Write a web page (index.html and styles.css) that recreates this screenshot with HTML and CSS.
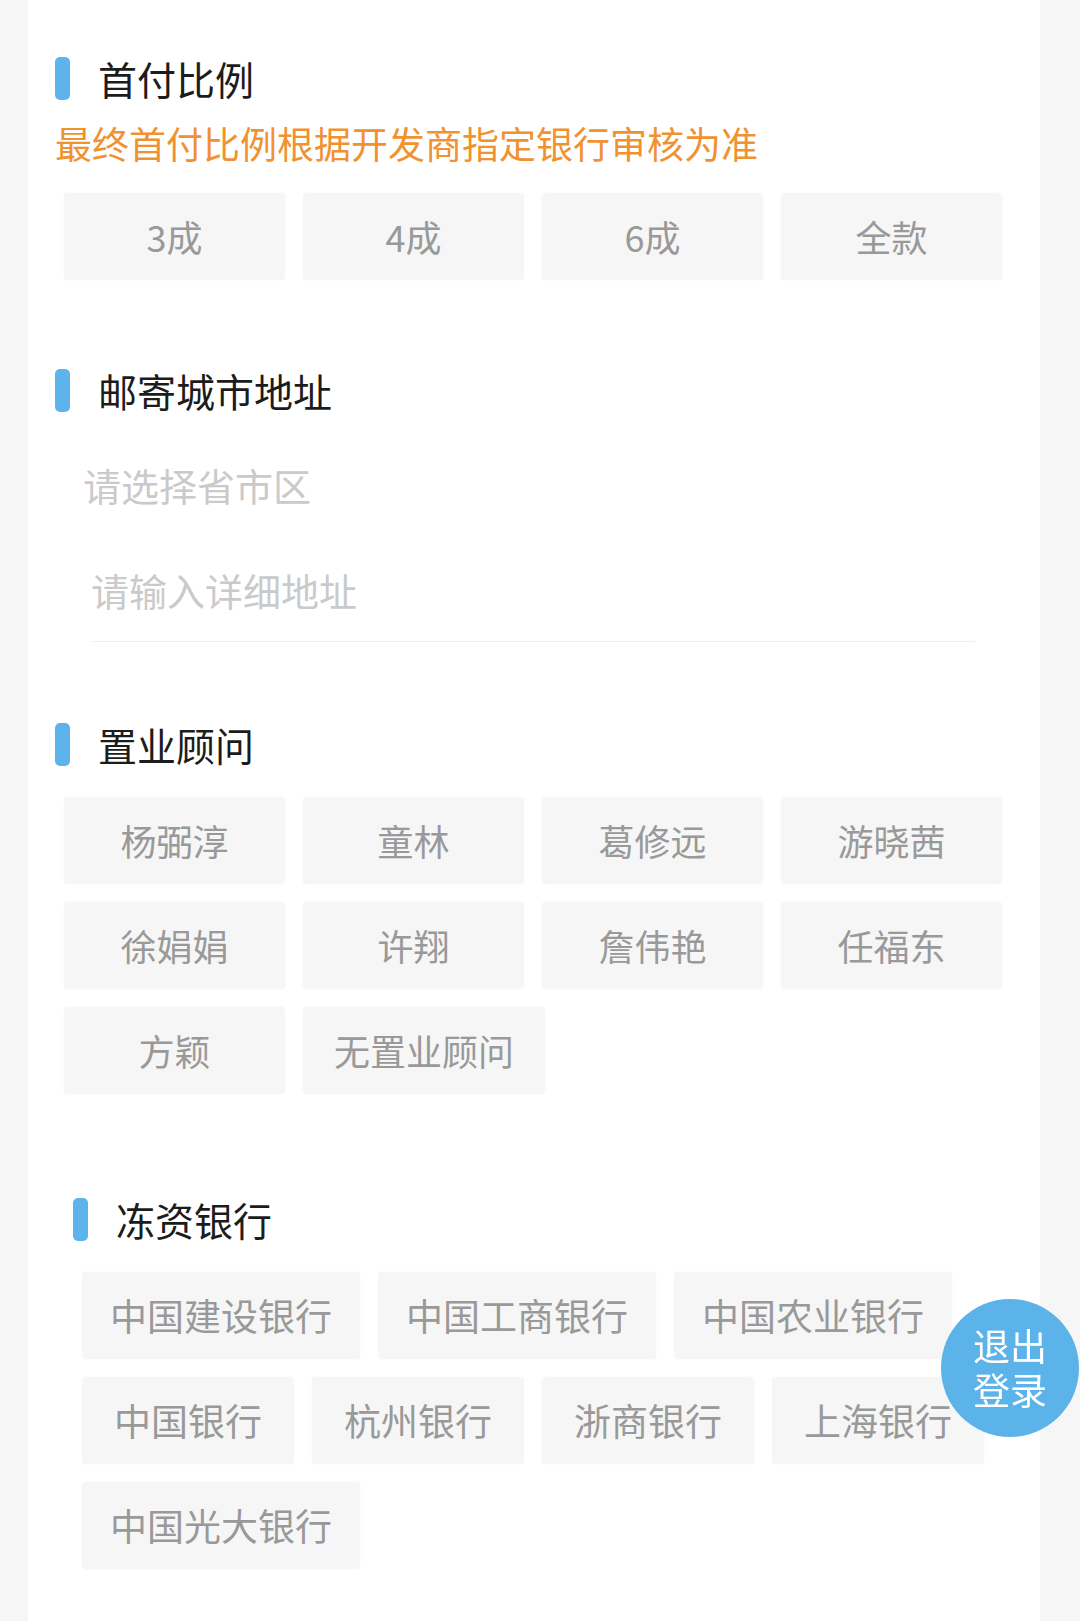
FILE: index.html
```html
<!DOCTYPE html>
<html lang="zh-CN">
<head>
    <meta charset="UTF-8">
    <meta name="viewport" content="width=device-width, initial-scale=1.0">
    <title>购房信息</title>
    <link rel="stylesheet" href="styles.css">
</head>
<body>
    <div class="card">
        <!-- 首付比例 -->
        <div class="section">
            <div class="section-title"><span class="bar"></span>首付比例</div>
            <div class="note">最终首付比例根据开发商指定银行审核为准</div>
            <div class="options">
                <div class="option">3成</div>
                <div class="option">4成</div>
                <div class="option">6成</div>
                <div class="option">全款</div>
            </div>
        </div>

        <!-- 邮寄地址 -->
        <div class="section section-address">
            <div class="section-title"><span class="bar"></span>邮寄城市地址</div>
            <div class="picker">请选择省市区</div>
            <div class="address-input">请输入详细地址</div>
        </div>

        <!-- 置业顾问 -->
        <div class="section section-advisor">
            <div class="section-title"><span class="bar"></span>置业顾问</div>
            <div class="options">
                <div class="option">杨弼淳</div>
                <div class="option">童林</div>
                <div class="option">葛修远</div>
                <div class="option">游晓茜</div>
                <div class="option">徐娟娟</div>
                <div class="option">许翔</div>
                <div class="option">詹伟艳</div>
                <div class="option">任福东</div>
                <div class="option">方颖</div>
                <div class="option">无置业顾问</div>
            </div>
        </div>

        <!-- 冻资银行 -->
        <div class="section section-bank">
            <div class="section-title"><span class="bar"></span>冻资银行</div>
            <div class="options">
                <div class="option bank">中国建设银行</div>
                <div class="option bank">中国工商银行</div>
                <div class="option bank">中国农业银行</div>
                <div class="option bank">中国银行</div>
                <div class="option bank">杭州银行</div>
                <div class="option bank">浙商银行</div>
                <div class="option bank">上海银行</div>
                <div class="option bank">中国光大银行</div>
            </div>
        </div>
    </div>

    <div class="logout">退出<br>登录</div>
</body>
</html>
```

FILE: styles.css
```css
body {
    margin: 0;
    background: #f6f6f6;
    font-family: "Noto Sans CJK SC", "Noto Sans", sans-serif;
    color: #1c1c1c;
}
.card {
    margin: 0 40px 0 28px;
    min-height: 1621px;
    box-sizing: border-box;
    padding: 57px 20px 0 27px;
    background: #fff;
}
.section-title {
    display: flex;
    align-items: center;
    height: 43px;
    font-size: 39px;
    line-height: 43px;
    color: #1c1c1c;
}
.bar {
    width: 15px;
    height: 43px;
    margin-right: 28px;
    border-radius: 5px;
    background: #5db4ec;
}
.note {
    margin: 21px 0 19px;
    font-size: 37px;
    line-height: 44px;
    color: #f0922f;
}
.options {
    display: flex;
    flex-wrap: wrap;
}
.option {
    box-sizing: border-box;
    min-width: 221px;
    height: 87px;
    margin: 9px;
    padding: 0 31px;
    border-radius: 4px;
    background: #f6f6f6;
    box-shadow: 0 0 3px rgba(0,0,0,0.03);
    font-size: 36px;
    line-height: 87px;
    text-align: center;
    color: #999;
}
.option.bank {
    min-width: 212px;
    padding: 0 28px;
    font-size: 37px;
}
.section-address {
    margin-top: 80px;
}
.picker {
    margin: 23px 0 0 28px;
    height: 100px;
    font-size: 38px;
    line-height: 100px;
    color: #cacaca;
}
.address-input {
    width: 884px;
    margin-left: 36px;
    padding: 30px 0 26px;
    border-bottom: 1px solid #efefef;
    font-size: 38px;
    line-height: 50px;
    color: #cacaca;
}
.section-advisor {
    margin-top: 81px;
}
.section-advisor .options,
.section-bank .options {
    margin-top: 22px;
}
.section-bank {
    margin-top: 95px;
    margin-left: 18px;
}
.logout {
    position: fixed;
    right: 1px;
    top: 1299px;
    width: 138px;
    height: 138px;
    box-sizing: border-box;
    padding-top: 24px;
    border-radius: 50%;
    background: #5cb3ea;
    color: #fff;
    font-size: 37px;
    line-height: 44px;
    text-align: center;
}
```
